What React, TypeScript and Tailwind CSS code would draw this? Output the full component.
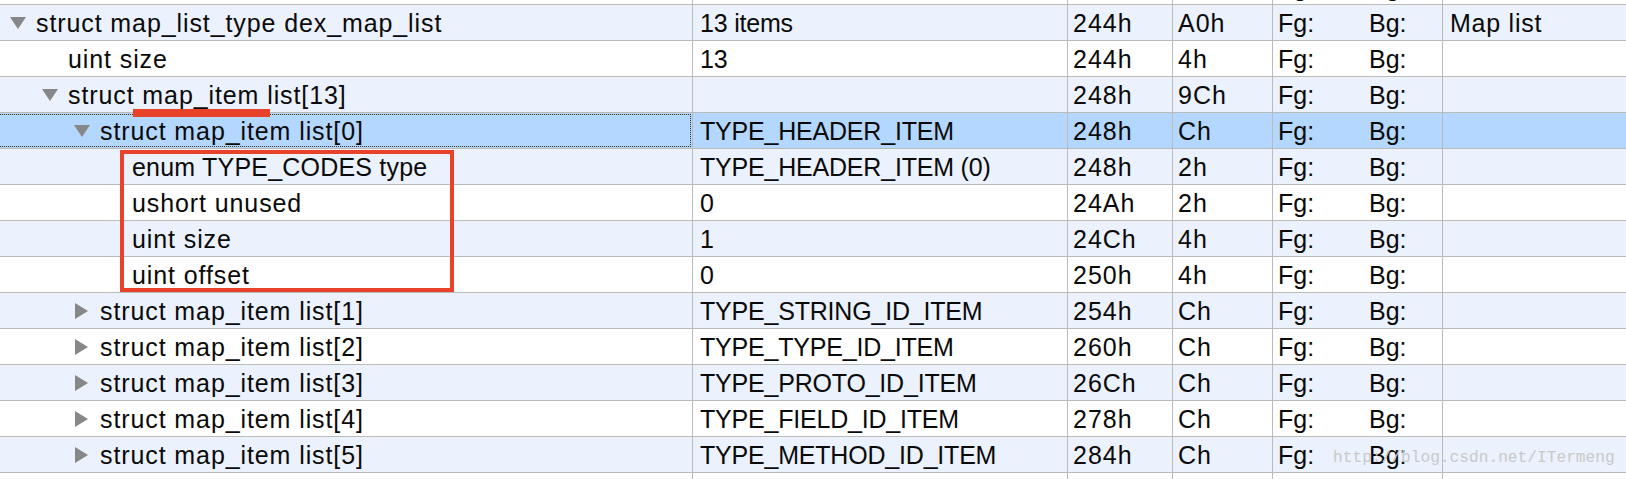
import React from 'react';

type Row = {
  level: number;
  arrow?: 'down' | 'right';
  name: string;
  tight?: boolean;
  value?: string;
  start?: string;
  size?: string;
  color?: boolean;
  comment?: string;
  selected?: boolean;
};

// first and last rows are only partly scrolled into view
const rows: Row[] = [
  { level: 0, name: '', color: true },
  { level: 0, arrow: 'down', name: 'struct map_list_type dex_map_list', value: '13 items', start: '244h', size: 'A0h', color: true, comment: 'Map list' },
  { level: 1, name: 'uint size', value: '13', start: '244h', size: '4h', color: true },
  { level: 1, arrow: 'down', name: 'struct map_item list[13]', value: '', start: '248h', size: '9Ch', color: true },
  { level: 2, arrow: 'down', name: 'struct map_item list[0]', value: 'TYPE_HEADER_ITEM', start: '248h', size: 'Ch', color: true, selected: true },
  { level: 3, name: 'enum TYPE_CODES type', tight: true, value: 'TYPE_HEADER_ITEM (0)', start: '248h', size: '2h', color: true },
  { level: 3, name: 'ushort unused', value: '0', start: '24Ah', size: '2h', color: true },
  { level: 3, name: 'uint size', value: '1', start: '24Ch', size: '4h', color: true },
  { level: 3, name: 'uint offset', value: '0', start: '250h', size: '4h', color: true },
  { level: 2, arrow: 'right', name: 'struct map_item list[1]', value: 'TYPE_STRING_ID_ITEM', start: '254h', size: 'Ch', color: true },
  { level: 2, arrow: 'right', name: 'struct map_item list[2]', value: 'TYPE_TYPE_ID_ITEM', start: '260h', size: 'Ch', color: true },
  { level: 2, arrow: 'right', name: 'struct map_item list[3]', value: 'TYPE_PROTO_ID_ITEM', start: '26Ch', size: 'Ch', color: true },
  { level: 2, arrow: 'right', name: 'struct map_item list[4]', value: 'TYPE_FIELD_ID_ITEM', start: '278h', size: 'Ch', color: true },
  { level: 2, arrow: 'right', name: 'struct map_item list[5]', value: 'TYPE_METHOD_ID_ITEM', start: '284h', size: 'Ch', color: true },
  { level: 2, arrow: 'right', name: 'struct map_item list[6]', value: 'TYPE_CLASS_DEF_ITEM', start: '290h', size: 'Ch', color: true },
];

const indent = ['pl-[4px]', 'pl-[36px]', 'pl-[68px]', 'pl-[100px]'];

function Arrow({ dir }: { dir?: 'down' | 'right' }) {
  if (!dir) return <span className="w-[32px] shrink-0" />;
  return (
    <span className="w-[32px] shrink-0 flex items-center -mt-[2px]">
      {dir === 'down' ? (
        <svg width="16" height="12" viewBox="0 0 16 12" className="ml-[6px]">
          <path d="M0 0 H16 L8 12 Z" fill="#878787" />
        </svg>
      ) : (
        <svg width="13" height="16" viewBox="0 0 13 16" className="ml-[7px]">
          <path d="M0 0 L13 8 L0 16 Z" fill="#878787" />
        </svg>
      )}
    </span>
  );
}

export default function App() {
  return (
    <div className="relative w-[1626px] h-[479px] overflow-hidden bg-white text-[25px] text-[#0a0a0a] font-['Liberation_Sans',Arial,sans-serif] leading-none">
      <div className="-mt-[31px] flex flex-col">
        {rows.map((r, i) => {
          const bg = r.selected ? 'bg-[#b3d7fe]' : i % 2 === 1 ? 'bg-[#ebf1fd]' : 'bg-white';
          return (
            <div key={i} className={`flex h-[36px] border-b border-[#bababa] ${bg}`}>
              <div className="w-[693px] shrink-0 border-r border-[#bababa] flex">
                <div
                  className={`flex-1 flex items-center pt-[2px] ${indent[r.level]} ${
                    r.selected ? 'border-y border-r border-dotted border-[#3b2a18] my-[1px] mr-[1px]' : ''
                  }`}
                >
                  {r.level < 3 && <Arrow dir={r.arrow} />}
                  {r.level === 3 && <span className="w-[32px] shrink-0" />}
                  <span className={`whitespace-nowrap ${r.tight ? 'tracking-[0.2px]' : 'tracking-[0.9px]'}`}>{r.name}</span>
                </div>
              </div>
              <div className="w-[375px] shrink-0 border-r border-[#bababa] flex items-center pt-[2px] pl-[7px] whitespace-nowrap tracking-[-0.2px]">
                {r.value}
              </div>
              <div className="w-[105px] shrink-0 border-r border-[#bababa] flex items-center pt-[2px] pl-[5px] tracking-[1px]">
                {r.start}
              </div>
              <div className="w-[100px] shrink-0 border-r border-[#bababa] flex items-center pt-[2px] pl-[5px] tracking-[1px]">
                {r.size}
              </div>
              <div className="w-[170px] shrink-0 border-r border-[#bababa] flex items-center pt-[2px] pl-[5px]">
                {r.color && (
                  <>
                    <span className="w-[91px]">Fg:</span>
                    <span>Bg:</span>
                  </>
                )}
              </div>
              <div className="flex-1 flex items-center pt-[2px] pl-[7px] whitespace-nowrap tracking-[0.75px]">{r.comment}</div>
            </div>
          );
        })}
      </div>

      {/* annotations */}
      <div className="absolute left-[133px] top-[109px] w-[137px] h-[8px] bg-[#e8422b]" />
      <div className="absolute left-[120px] top-[150px] w-[334px] h-[142px] border-[4px] border-[#e8422b]" />

      <div className="absolute left-[1333px] top-[450px] text-[16.2px] leading-none text-[#c9c9c9] font-['Liberation_Mono',monospace] whitespace-nowrap">
        http://blog.csdn.net/ITermeng
      </div>
    </div>
  );
}
